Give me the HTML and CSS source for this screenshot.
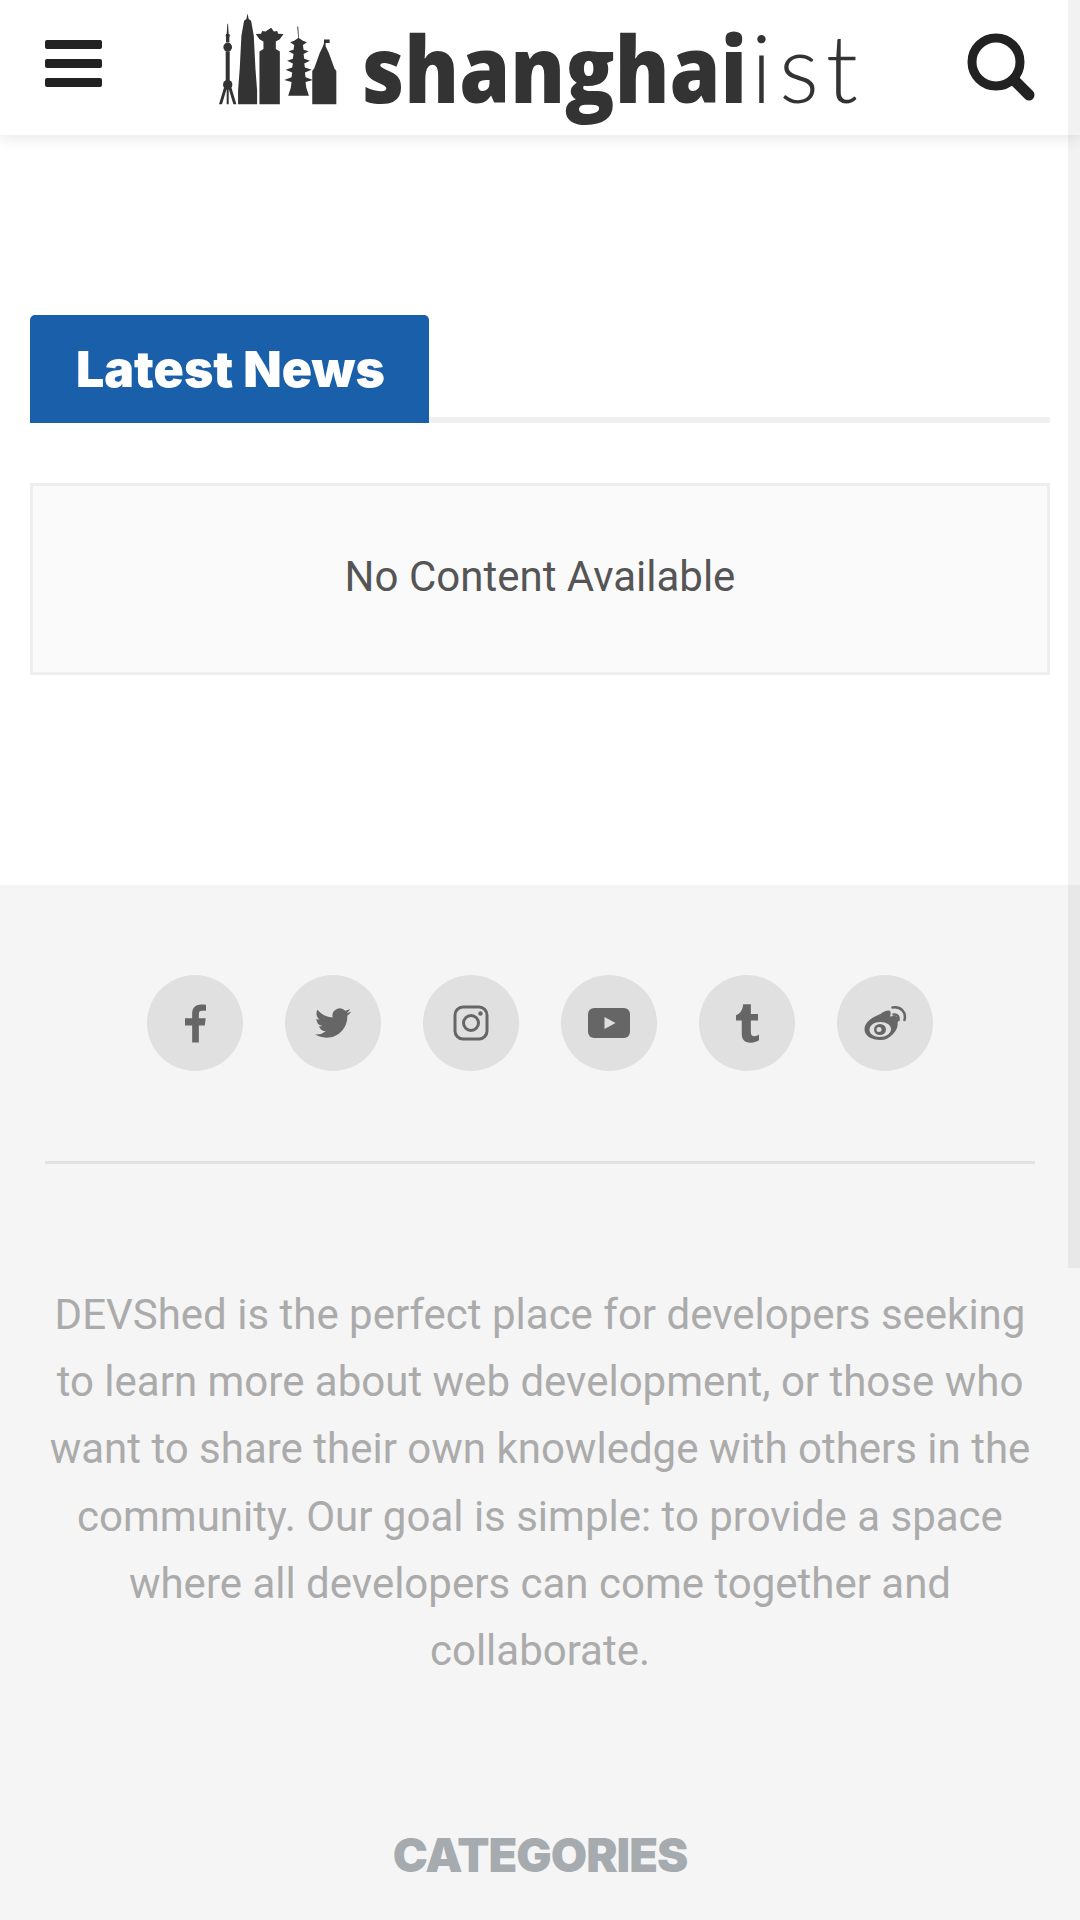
FILE: index.html
```html
<!DOCTYPE html>
<html lang="en">
<head>
  <meta charset="UTF-8" />
  <meta name="viewport" content="width=device-width, initial-scale=1.0"/>
  <title>Shanghaiist</title>
  <link rel="stylesheet" href="styles.css">
</head>
<body>

  <!-- Header -->
  <header class="site-header">
    <button class="menu-btn" aria-label="Menu">
      <span></span><span></span><span></span>
    </button>
    <a class="logo" href="#">
      <svg class="logo-svg" viewBox="0 -12 660 144" aria-label="shanghaiist">
        <svg x="0" y="0" width="122" height="96" viewBox="50 30 365 280" preserveAspectRatio="none">
          <!-- pearl tower -->
          <path d="M81 70h2l2 30h-6z M77 100h10v24h-10z M76 150h12v90h-12z"/>
          <circle cx="82" cy="105" r="6"/>
          <circle cx="82" cy="138" r="13"/>
          <circle cx="82" cy="248" r="14"/>
          <path d="M71 256l8 4-14 45h-9z M93 256l-8 4 14 45h9z M79 260h6v45h-6z"/>
          <!-- tall tower -->
          <path d="M141 40l4 16 7 5 8 44 5 96 5 64v40h-57v-40l5-64 5-96 8-44 7-5z"/>
          <!-- crown tower -->
          <path d="M212 82l8 11 10-2 3 8 16 1-11 15-12 7v22l12 7v154h-61v-154l12-7v-22l-12-7-11-15 16-1 3-8 10 2z"/>
          <!-- pagoda -->
          <path d="M290 78h3l2 34 12 8 12 4-12 8 2 14 15 4-15 8 2 14 17 6-17 8 2 12 20 6-20 8 2 14 22 8-22 6 2 16 8 24h-62l8-24 2-16-22-6 22-8 2-14-20-8 20-6 2-12-17-8 17-6 2-14-15-8 15-4 2-14-12-8 12-4 12-8z"/>
          <!-- spire building -->
          <path d="M371 116h16v10h-12v10l10 20 8 22 8 22 6 8v97h-72v-97l6-8 8-22 8-22 10-20 3-8v-12z"/>
        </svg>
        <text class="logo-bold" transform="translate(145 93) scale(.89 1)">shanghai</text>
        <text class="logo-thin" x="534" y="93">ist</text>
      </svg>
    </a>
    <button class="search-btn" aria-label="Search">
      <svg viewBox="0 0 68 68" aria-hidden="true">
        <circle cx="29" cy="29" r="24" fill="none" stroke="#222" stroke-width="9"/>
        <path d="M47 47l15 15" fill="none" stroke="#222" stroke-width="11" stroke-linecap="round"/>
      </svg>
    </button>
  </header>

  <!-- Latest news -->
  <main class="content">
    <div class="section-head">
      <h2 class="section-tab">Latest News</h2>
    </div>
    <div class="empty-box">No Content Available</div>
  </main>

  <!-- Footer -->
  <footer class="site-footer">
    <div class="social">
      <a class="social-item" href="#" aria-label="Facebook">
        <svg class="icon-f" viewBox="0 0 22 40"><path d="M14.500 40V22h6.200l1-7.500h-7.200v-4.300c0-2.300.8-3.500 3.500-3.500H22V.3C21 .2 19.200 0 17 0 11.500 0 7.500 3.200 7.500 9.400v5.100H0V22h7.500v18z"/></svg>
      </a>
      <a class="social-item" href="#" aria-label="Twitter">
        <svg class="icon-tw" viewBox="0 0 24 24"><path d="M23.953 4.570a10 10 0 01-2.825.775 4.958 4.958 0 002.163-2.723c-.951.555-2.005.959-3.127 1.184a4.920 4.920 0 00-8.384 4.482C7.690 8.095 4.067 6.130 1.640 3.162a4.822 4.822 0 00-.666 2.475c0 1.710.870 3.213 2.188 4.096a4.904 4.904 0 01-2.228-.616v.060a4.923 4.923 0 003.946 4.827 4.996 4.996 0 01-2.212.085 4.936 4.936 0 004.604 3.417 9.867 9.867 0 01-6.102 2.105c-.390 0-.779-.023-1.170-.067a13.995 13.995 0 007.557 2.209c9.053 0 13.998-7.496 13.998-13.985 0-.210 0-.420-.015-.630A9.935 9.935 0 0024 4.590z"/></svg>
      </a>
      <a class="social-item" href="#" aria-label="Instagram">
        <svg class="icon-ig" viewBox="0 0 36 36">
          <rect x="2" y="2" width="32" height="32" rx="8" fill="none" stroke="#666" stroke-width="3"/>
          <circle cx="18" cy="18" r="7.500" fill="none" stroke="#666" stroke-width="3"/>
          <circle cx="27.500" cy="8.500" r="2.200"/>
        </svg>
      </a>
      <a class="social-item" href="#" aria-label="YouTube">
        <svg class="icon-yt" viewBox="0 0 42 30">
          <rect width="42" height="30" rx="6"/>
          <path class="yt-play" d="M16.500 9l11 6-11 6z"/>
        </svg>
      </a>
      <a class="social-item" href="#" aria-label="Tumblr">
        <svg class="icon-tu" viewBox="0 0 24 40"><path d="M15.500 0v10H23v7h-7.500v12c0 3 1.200 4.200 3.500 4.200 1.800 0 3.400-.7 5-1.700v6C21.200 39 18.800 40 15.500 40 8 40 6 36 6 31V17H0v-5.500C4.500 10 7 5.500 7.500 0z"/></svg>
      </a>
      <a class="social-item" href="#" aria-label="Weibo">
        <svg class="icon-wb" viewBox="0 0 42 36">
          <path fill-rule="evenodd" d="M16 9c4-3 9-5 10-2 .5 1.500 0 3-.5 4.500 3-1 7-1 8 1.500 .8 2-.2 4-.5 5 1.500 5-6 17-17 17C7 35 0 31 0 24 0 19 5 13 16 9z M16 17c-6.500 0-11 3.500-11 8 0 4 4.500 7 10 7 6.500 0 11.500-3.500 11.500-8 0-4-4.500-7-10.500-7z"/>
          <ellipse cx="15.500" cy="24.500" rx="6" ry="5.500"/>
          <circle class="wb-eye" cx="14.500" cy="24.500" r="2.500"/>
          <path class="wb-wave" d="M29 9.500c3.500-.5 5.500 1.500 5 5.500"/>
          <path class="wb-wave" d="M28 2.500c8-1.500 14 4.500 12 12.500"/>
        </svg>
      </a>
    </div>
    <hr class="footer-rule">
    <p class="about">DEVShed is the perfect place for developers seeking to learn more about web development, or those who want to share their own knowledge with others in the community. Our goal is simple: to provide a space where all developers can come together and collaborate.</p>
    <h3 class="footer-title">CATEGORIES</h3>
  </footer>

  <!-- Scrollbar overlay -->
  <div class="scroll-thumb"></div>

</body>
</html>
```

FILE: styles.css
```css
* {
  box-sizing: border-box;
  margin: 0;
  padding: 0;
}

html, body {
  height: 1920px;
  overflow: hidden;
}

body {
  position: relative;
  font-family: Roboto, "Liberation Sans", sans-serif;
  background: #fff;
}

.site-header {
  position: relative;
  display: flex;
  align-items: center;
  justify-content: space-between;
  height: 135px;
  padding: 0 45px;
  background: #fff;
  box-shadow: 0 3px 14px rgba(0, 0, 0, 0.1);
}

.menu-btn {
  display: flex;
  flex-direction: column;
  gap: 10px;
  width: 57px;
  background: none;
  border: none;
  margin-top: -8px;
}

.menu-btn span {
  display: block;
  height: 9px;
  background: #222;
  border-radius: 2px;
}

.logo {
  display: block;
  align-self: flex-start;
  margin-top: -2px;
  margin-left: 5px;
  margin-right: -20px;
}

.logo-svg {
  display: block;
  width: 660px;
  height: 144px;
  fill: #333;
}

.logo-bold {
  font-family: "Open Sans", sans-serif;
  font-size: 92px;
  font-weight: 800;
}

.logo-thin {
  font-family: Lato, sans-serif;
  font-size: 94px;
  font-weight: 300;
  letter-spacing: 7px;
}

.search-btn {
  width: 68px;
  height: 68px;
  background: none;
  border: none;
  margin-top: -1px;
}

.search-btn svg {
  display: block;
  width: 68px;
  height: 68px;
}

.content {
  padding: 180px 30px 210px;
}

.section-head {
  display: flex;
  height: 108px;
  border-bottom: 6px solid #f0f0f0;
}

.section-tab {
  width: 399px;
  height: 108px;
  padding-left: 46px;
  font-family: Inter, sans-serif;
  font-size: 50px;
  font-weight: 900;
  line-height: 108px;
  color: #fff;
  background: #1a5fa9;
  border-radius: 5px 5px 0 0;
}

.empty-box {
  display: flex;
  align-items: center;
  justify-content: center;
  height: 192px;
  margin-top: 60px;
  padding-bottom: 5px;
  font-size: 42px;
  color: #555;
  background: #fafafa;
  border: 3px solid #eeeeee;
}

.site-footer {
  height: 1035px;
  padding: 90px 45px 0;
  background: #f5f5f5;
}

.social {
  display: flex;
  justify-content: center;
  gap: 42px;
}

.social-item {
  display: flex;
  align-items: center;
  justify-content: center;
  width: 96px;
  height: 96px;
  border-radius: 50%;
  background: #e0e0e0;
}

.social-item svg {
  display: block;
  fill: #666;
}

.icon-f { width: 21px; height: 39px; }
.icon-tw { width: 36px; height: 36px; }
.icon-ig { width: 36px; height: 36px; }
.icon-yt { width: 42px; height: 30px; }
.icon-tu { width: 23px; height: 39px; }
.icon-wb { width: 43px; height: 36px; }

.yt-play { fill: #e0e0e0; }
.wb-eye { fill: #e0e0e0; }

.social-item .wb-wave {
  fill: none;
  stroke: #666;
  stroke-width: 2.500;
  stroke-linecap: round;
}

.footer-rule {
  height: 3px;
  margin-top: 90px;
  background: #e2e2e2;
  border: none;
}

.about {
  margin-top: 117px;
  font-size: 42px;
  line-height: 67.200px;
  text-align: center;
  color: #ababab;
}

.footer-title {
  margin-top: 142px;
  font-family: Inter, sans-serif;
  font-size: 47px;
  font-weight: 900;
  letter-spacing: -1px;
  text-align: center;
  color: #a6abb0;
}

.scroll-thumb {
  position: absolute;
  top: 0;
  right: 0;
  width: 12px;
  height: 1268px;
  background: rgba(0, 0, 0, 0.05);
}
```
